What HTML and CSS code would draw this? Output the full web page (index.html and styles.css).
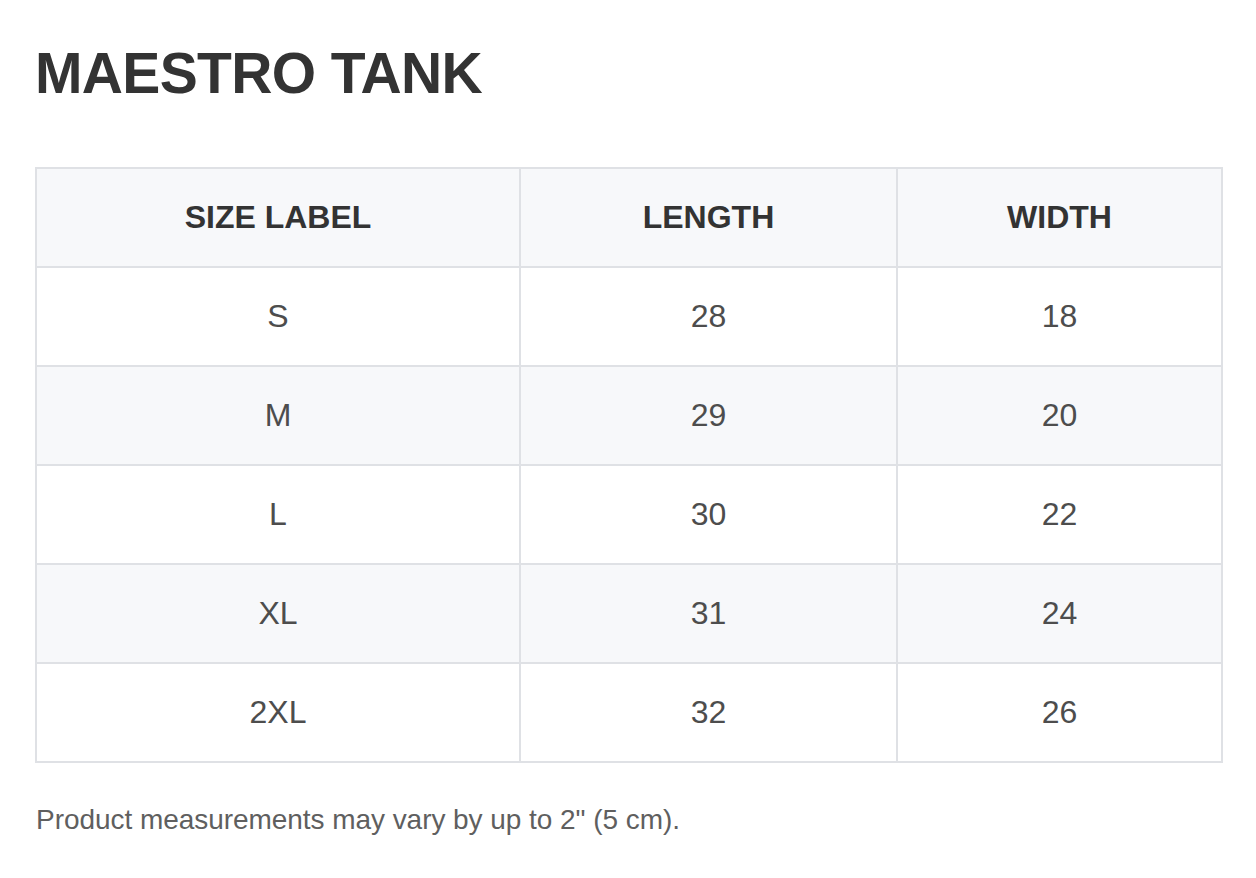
FILE: index.html
```html
<!DOCTYPE html>
<html>
<head>
<meta charset="utf-8">
<link rel="stylesheet" href="styles.css">
</head>
<body>
<main class="page">
  <h1 class="title">MAESTRO TANK</h1>
  <table class="sizes">
    <colgroup>
      <col class="c1"><col class="c2"><col class="c3">
    </colgroup>
    <thead>
      <tr><th>SIZE LABEL</th><th>LENGTH</th><th>WIDTH</th></tr>
    </thead>
    <tbody>
      <tr><td>S</td><td>28</td><td>18</td></tr>
      <tr class="alt"><td>M</td><td>29</td><td>20</td></tr>
      <tr><td>L</td><td>30</td><td>22</td></tr>
      <tr class="alt"><td>XL</td><td>31</td><td>24</td></tr>
      <tr><td>2XL</td><td>32</td><td>26</td></tr>
    </tbody>
  </table>
  <p class="note">Product measurements may vary by up to 2" (5 cm).</p>
</main>
</body>
</html>
```
FILE: styles.css
```css
html, body {
  margin: 0;
  padding: 0;
  background: #ffffff;
}
body {
  font-family: "Liberation Sans", Arial, sans-serif;
  color: #333333;
}
.page {
  padding: 0 33px 0 35px;
}
.title {
  margin: 0;
  padding-top: 40px;
  font-size: 57px;
  line-height: 66px;
  font-weight: 700;
  color: #333333;
  letter-spacing: -0.65px;
}
.sizes {
  margin-top: 61px;
  width: 1188px;
  border-collapse: separate;
  border-spacing: 0;
  border-top: 2px solid #dfe1e5;
  border-left: 2px solid #dfe1e5;
  table-layout: fixed;
}
.c1 { width: 484px; }
.c2 { width: 377px; }
.c3 { width: 325px; }
.sizes th,
.sizes td {
  box-sizing: border-box;
  height: 99px;
  padding: 0;
  text-align: center;
  vertical-align: middle;
  border-right: 2px solid #dfe1e5;
  border-bottom: 2px solid #dfe1e5;
  font-size: 32px;
}
.sizes th {
  background: #f7f8fa;
  font-weight: 700;
  color: #333333;
}
.sizes td {
  color: #4d4d4d;
}
.sizes tr.alt td {
  background: #f7f8fa;
}
.note {
  margin: 41px 0 0 1px;
  font-size: 28px;
  line-height: 32px;
  color: #5f5f5f;
  letter-spacing: -0.05px;
}
```
